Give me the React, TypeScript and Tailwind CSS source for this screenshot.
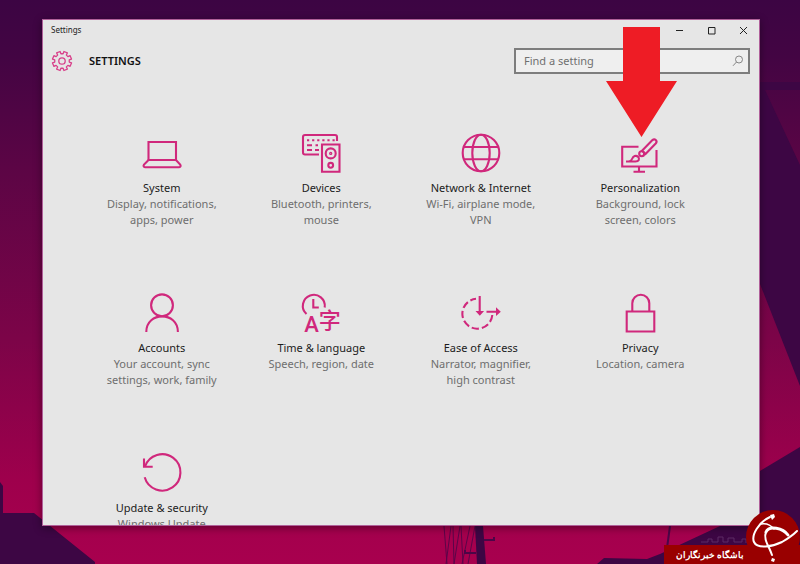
import type { ReactNode } from 'react';

interface Category {
  title: string;
  description: string;
  icon: ReactNode;
}

// Eight-tooth gear outline centred on 12,12
const GEAR_POINTS = Array.from({ length: 8 }, (_, i) => {
  const steps = [[-14, 8], [-11, 10.6], [11, 10.6], [14, 8]];
  return steps
    .map(([offset, r]) => {
      const a = ((i * 45 + 22.5 + offset) * Math.PI) / 180;
      return `${(12 + r * Math.cos(a)).toFixed(2)},${(12 + r * Math.sin(a)).toFixed(2)}`;
    })
    .join(' ');
}).join(' ');

const CATEGORIES: Category[] = [
  {
    title: 'System',
    description: 'Display, notifications, apps, power',
    icon: (
      <>
        <path d="M6.500 27V9H34v18" />
        <path d="M6.500 27H34l4.200 4.600c.9 1.400.3 2.600-1 2.600H3c-1.300 0-1.900-1.200-1-2.600z" />
      </>
    ),
  },
  {
    title: 'Devices',
    description: 'Bluetooth, printers, mouse',
    icon: (
      <>
        <path d="M18 21.500H4Q2 21.500 2 19.500V4Q2 2 4 2H34Q36 2 36 4V8" />
        <path d="M6 7.200H34" strokeDasharray="2.200 2.900" />
        <path d="M6 12.200h5M14.500 12.200h2.500M6 17h5M14 17h4" />
        <path d="M21 11.500H38.500V38.800H21z" />
        <circle cx="29.700" cy="20.400" r="5" />
        <circle cx="29.700" cy="20.400" r="0.600" />
        <circle cx="29.700" cy="32.300" r="2.400" />
      </>
    ),
  },
  {
    title: 'Network & Internet',
    description: 'Wi-Fi, airplane mode, VPN',
    icon: (
      <>
        <circle cx="20" cy="20" r="18.300" />
        <ellipse cx="20" cy="20" rx="8.700" ry="18.300" />
        <path d="M3 14h34M3 26.300h34" />
      </>
    ),
  },
  {
    title: 'Personalization',
    description: 'Background, lock screen, colors',
    icon: (
      <>
        <path d="M18.500 13.700H2.200V33.500H36.500V17" />
        <path d="M19 33.500v5M13.500 38.700h11.500" />
        <path d="M22 17.700 32.200 7.300c2.600-2.500 5.800.6 3.500 3.200L25.500 21z" />
        <circle cx="21.700" cy="20.800" r="2.500" />
        <path d="M6 28.500c4.500 0 5.500-.8 6.300-3 .8-2.300 3.700-3.600 5.700-1.700 2.200 2.200.7 4.700-2.500 4.700z" />
      </>
    ),
  },
  {
    title: 'Accounts',
    description: 'Your account, sync settings, work, family',
    icon: (
      <>
        <circle cx="20" cy="12.300" r="10.900" />
        <path d="M4.300 39c0-20.800 31.600-20.800 31.600 0" />
      </>
    ),
  },
  {
    title: 'Time & language',
    description: 'Speech, region, date',
    icon: (
      <>
        <path d="M5.500 21A11 11 0 1 1 23.700 14.500" />
        <path d="M12.300 6v8.500h5.500" />
        <g
          className="fill-[#d0287c] stroke-none"
          fontFamily="Roboto, 'Noto Sans CJK SC', sans-serif"
          fontWeight="500"
          fontSize="22"
          textAnchor="middle"
        >
          <text x="10.500" y="39">A</text>
          <text x="28.700" y="34.500">字</text>
        </g>
      </>
    ),
  },
  {
    title: 'Ease of Access',
    description: 'Narrator, magnifier, high contrast',
    icon: (
      <>
        <path d="M31.300 22A15 15 0 1 1 15 5.800" strokeDasharray="7.300 3" />
        <path d="M18.700 3v17M25.500 18.700H36" />
        <path className="fill-[#d0287c] stroke-none" d="M14.500 18h8.600l-4.300 4.800zM35 14.300l4.800 4.400L35 23z" />
      </>
    ),
  },
  {
    title: 'Privacy',
    description: 'Location, camera',
    icon: (
      <>
        <path d="M6.700 18.500H34.300V38.500H6.700z" />
        <path d="M12.300 18.500V10.200a8.500 8.500 0 0 1 17 0v8.300" />
      </>
    ),
  },
  {
    title: 'Update & security',
    description: 'Windows Update',
    icon: (
      <>
        <path d="M2.700 24.300A18.200 18.200 0 1 0 3 13.500" />
        <path d="M2 5.500v8.200h8.700" />
      </>
    ),
  },
];

function Wallpaper() {
  return (
    <svg className="absolute inset-0 h-full w-full" viewBox="0 0 800 564" preserveAspectRatio="none" aria-hidden="true">
      <defs>
        <linearGradient id="dusk" x1="0" y1="0" x2="0" y2="1">
          <stop offset="0" stopColor="#3c0543" />
          <stop offset="0.100" stopColor="#430543" />
          <stop offset="0.300" stopColor="#5c0545" />
          <stop offset="0.600" stopColor="#7c0448" />
          <stop offset="0.850" stopColor="#9e004c" />
          <stop offset="1" stopColor="#a8004e" />
        </linearGradient>
      </defs>
      <path fill="url(#dusk)" d="M0 0H800V564H0z" />
      <g fill="#3d0644">
        <path d="M0 482l3 4v27h31l61 49v2H0z" />
        <path d="M755 82H800V90H765L800 165V386L760 284H755z" />
        <path d="M755 474L800 447V564H597l7-6 43 1 13-5 60-28h35z" />
        <path d="M475 526h8l3 38h-9z" />
      </g>
      <path
        fill="none"
        stroke="#5b0549"
        d="M444 526l3 38M453 526l1 38M461 526l2 38M451 526l-5 38M460 526l-6 38M470 526l-8 38M475 526l-7 38"
      />
      <path fill="none" stroke="#4b0647" strokeWidth="2" d="M484 540h10v-3M476 553h-11v-3M670 526l-3 22" />
    </svg>
  );
}

function TitleBar() {
  return (
    <div className="flex h-5 shrink-0 items-center justify-between pl-2">
      <span className="text-[8px] text-[#222]">Settings</span>
      <div className="flex text-[#222]">
        <button type="button" aria-label="Minimize" className="flex h-5 w-8 items-center justify-center">
          <svg width="9" height="9" viewBox="0 0 9 9" stroke="currentColor"><path d="M1 4.500h7" /></svg>
        </button>
        <button type="button" aria-label="Maximize" className="flex h-5 w-8 items-center justify-center">
          <svg width="9" height="9" viewBox="0 0 9 9" fill="none" stroke="currentColor"><path d="M1.500 1.500h6.500v6.500H1.500z" /></svg>
        </button>
        <button type="button" aria-label="Close" className="flex h-5 w-8 items-center justify-center">
          <svg width="9" height="9" viewBox="0 0 9 9" stroke="currentColor"><path d="M1 1l7 7M8 1L1 8" /></svg>
        </button>
      </div>
    </div>
  );
}

function SearchBox() {
  return (
    <label className="flex h-[26px] w-[236px] items-center border-2 border-[#7d7d7d] bg-[#efefef] pr-1 pl-2">
      <input
        type="text"
        aria-label="Find a setting"
        placeholder="Find a setting"
        className="min-w-0 flex-1 bg-transparent text-[11px] outline-none placeholder:text-[#707070]"
      />
      <svg className="size-3" viewBox="0 0 12 12" fill="none" stroke="#858585" aria-hidden="true">
        <circle cx="7" cy="4.500" r="3.500" />
        <path d="M4.500 7L1 10.800" />
      </svg>
    </label>
  );
}

function CategoryTile({ title, description, icon }: Category) {
  return (
    <a href="#" className="flex h-40 flex-col items-center px-5 text-center text-[11px] leading-4">
      <svg className="mb-[7px] size-10 shrink-0 overflow-visible" viewBox="0 0 40 40" fill="none" stroke="#d0287c" strokeWidth="2.100" aria-hidden="true">
        {icon}
      </svg>
      <span className="whitespace-nowrap text-[#1c1c1c]">{title}</span>
      <span className="text-[#6e6e6e]">{description}</span>
    </a>
  );
}

function AgencyBadge() {
  return (
    <div className="absolute right-0 bottom-0 flex items-end">
      <svg className="absolute bottom-5 left-9 h-2 w-12" viewBox="0 0 48 8" fill="none" stroke="#5c2a64" aria-hidden="true">
        <path d="M1 6h7V3h4v3h6V1h5v5h5V2h6v4h8V3h4v4" />
      </svg>
      <div dir="rtl" className="flex h-[19px] items-center bg-[#990000] pr-14 pl-3 text-[9px] font-bold whitespace-nowrap text-white">
        <span>باشگاه خبرنگاران</span>
      </div>
      <svg className="absolute right-0 bottom-0 size-[54px]" viewBox="0 0 54 54" aria-hidden="true">
        <circle cx="27" cy="27" r="27" fill="#990000" />
        <g fill="none" stroke="#fff" strokeLinecap="round">
          <path strokeWidth="2" d="M24 7C13 12 5 25 8 32c3 7 18 5 28 0 7-4 12-8 15-11" />
          <path strokeWidth="3" d="M42 25c-5-7-19-10-22-3" />
          <path strokeWidth="2" d="M20 22c-3 7 3 14 6 23" />
          <path strokeWidth="1.500" d="M15 14c5-1 9 0 13 5" />
        </g>
        <path fill="#fff" d="M24 5l4-1 1 3-3 3zM26 48l3 1-1 3-3-1z" />
      </svg>
    </div>
  );
}

export default function App() {
  return (
    <div className="relative flex h-screen flex-col overflow-hidden bg-[#3d0644] pt-[19px] pr-10 pb-[38px] pl-[42px] font-['Noto_Sans','Open_Sans',sans-serif]">
      <Wallpaper />
      <main className="relative flex min-h-0 flex-1 flex-col overflow-hidden border border-[#b0609a] bg-[#e6e6e6] shadow-[0_2px_8px_rgba(0,0,0,0.4)]">
        <TitleBar />
        <header className="flex items-center justify-between pt-2 pr-[9px] pl-2">
          <div className="flex items-center gap-4">
            <svg className="size-[22px]" viewBox="0 0 24 24" fill="none" stroke="#d8408a" strokeWidth="1.400" strokeLinejoin="round" aria-hidden="true">
              <polygon points={GEAR_POINTS} />
              <circle cx="12" cy="12" r="3.500" />
            </svg>
            <h1 className="text-[11px] font-semibold text-[#111]">SETTINGS</h1>
          </div>
          <SearchBox />
        </header>
        <nav className="grid grid-cols-4 px-[39px] pt-[59px]">
          {CATEGORIES.map(category => (
            <CategoryTile key={category.title} {...category} />
          ))}
        </nav>
      </main>
      <svg className="pointer-events-none absolute top-[27px] right-[123px] h-[110px] w-[71px]" viewBox="0 0 71 110" aria-hidden="true">
        <path fill="#ee1c25" d="M17 0h37v54h17L35.500 110 0 54h17z" />
      </svg>
      <AgencyBadge />
    </div>
  );
}
